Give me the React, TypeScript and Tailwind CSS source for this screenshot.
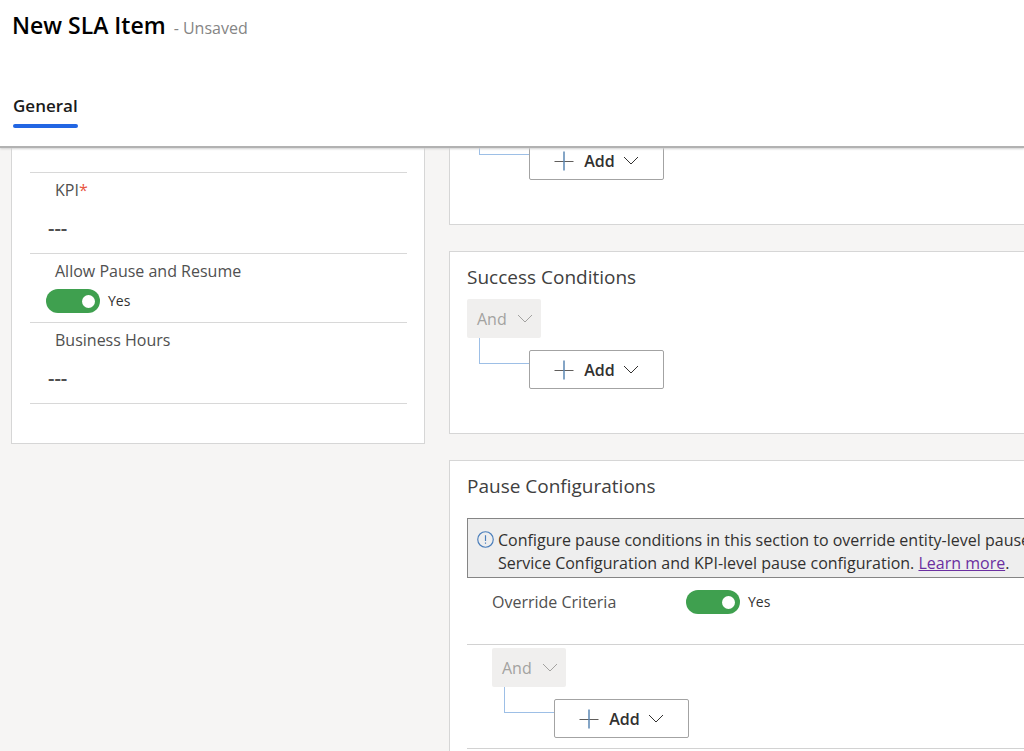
import { useState, type ReactNode } from 'react';

interface FieldProps {
    id: string;
    label: string;
    required?: boolean;
}

function PlusIcon() {
    return (
        <svg width="20" height="20" viewBox="0 0 20 20" fill="none" aria-hidden="true">
            <path d="M0.5 10.5H19.5" stroke="#605e5c" strokeWidth="1" />
            <path d="M10 0.5V19.5" stroke="#5b87b3" strokeWidth="1.5" />
        </svg>
    );
}

function ChevronIcon() {
    return (
        <svg width="16" height="16" viewBox="0 0 16 16" fill="none" aria-hidden="true">
            <path d="M1 4L8 11L15 4" stroke="currentColor" strokeWidth="1" />
        </svg>
    );
}

function InfoIcon() {
    return (
        <svg width="17" height="17" viewBox="0 0 16 16" fill="none" className="mt-0.5 shrink-0" aria-hidden="true">
            <circle cx="8" cy="8" r="7.3" stroke="#4a7ebb" strokeWidth="1.1" />
            <path d="M8 4V9.3M8 10.8V12" stroke="#4a7ebb" strokeWidth="1.1" />
        </svg>
    );
}

function Toggle({ id }: { id: string }) {
    const [on, setOn] = useState(true);

    return (
        <div className="flex items-center gap-2">
            <input
                id={id}
                type="checkbox"
                role="switch"
                checked={on}
                onChange={() => setOn(!on)}
                className="flex h-6 w-[54px] appearance-none items-center rounded-full bg-gray-400 px-[5px] before:size-[13px] before:rounded-full before:bg-white checked:justify-end checked:bg-[#3fa04f]"
            />
            <span className="text-sm text-[#323130]">{on ? 'Yes' : 'No'}</span>
        </div>
    );
}

function LookupField({ id, label, required }: FieldProps) {
    return (
        <div className="h-[81px] border-b border-[#d8d8d8] pt-[5px]">
            <label htmlFor={id} className="block pl-[25px] leading-6 text-[#505050]">
                {label}
                {required && <span className="text-[#e8563f]">*</span>}
            </label>
            <input
                id={id}
                defaultValue="---"
                className="mt-3 block h-7 w-full pl-[18px] text-xl font-semibold text-[#505050] outline-none"
            />
        </div>
    );
}

function AndButton() {
    return (
        <button disabled className="flex h-[39px] w-[74px] items-center justify-between rounded-xs bg-[#f0efee] pr-2 pl-2.5 text-[#a3a2a0]">
            And
            <ChevronIcon />
        </button>
    );
}

function AddRow() {
    return (
        <div className="flex">
            <div className="ml-3 h-[26px] w-[50px] border-b border-l border-[#9dbfe6]" />
            <button className="mt-3 flex h-[39px] w-[135px] items-center justify-center rounded-xs border border-[#a3a3a3] bg-white font-semibold text-[#323130]">
                <PlusIcon />
                <span className="mr-2 ml-2.5">Add</span>
                <ChevronIcon />
            </button>
        </div>
    );
}

function Card({ title, className, children }: { title?: string; className: string; children: ReactNode }) {
    return (
        <section className={`border border-[#d6d6d6] bg-white pl-[17px] ${className}`}>
            {title && <h2 className="text-[19px] leading-7 text-[#404040]">{title}</h2>}
            {children}
        </section>
    );
}

export default function App() {
    return (
        <div className="flex h-screen flex-col overflow-hidden bg-[#f6f5f4] font-['Open_Sans','Noto_Sans',sans-serif] text-base text-[#323130]">
            <header className="relative border-b-2 border-[#b2b2b2] bg-white px-3 shadow-[0_1px_2px_#d0d0d0]">
                <div className="flex items-baseline gap-2 pt-[7px]">
                    <h1 className="text-[23px] leading-9 font-semibold text-black">New SLA Item</h1>
                    <span className="text-base text-[#858585]">- Unsaved</span>
                </div>
                <nav className="flex pt-[51px] pb-[18px] pl-px">
                    <a href="#general" className="text-[17px] leading-6 font-semibold text-[#1a1a1a]">
                        General
                        <span className="mt-1.5 block h-1 rounded-full bg-[#2266e3]" />
                    </a>
                </nav>
            </header>

            <main className="flex min-h-0 flex-1 items-start gap-6 overflow-hidden pl-[11px]">
                <section className="w-[414px] shrink-0 border border-t-0 border-[#d6d6d6] bg-white pr-[17px] pb-[39px] pl-[18px]">
                    <div className="h-[25px] border-b border-[#d8d8d8]" />
                    <LookupField id="kpi" label="KPI" required />
                    <div className="h-[69px] border-b border-[#d8d8d8] pt-[5px]">
                        <label htmlFor="allow-pause" className="block pl-[25px] leading-6 text-[#505050]">
                            Allow Pause and Resume
                        </label>
                        <div className="mt-1.5 pl-4">
                            <Toggle id="allow-pause" />
                        </div>
                    </div>
                    <LookupField id="business-hours" label="Business Hours" />
                </section>

                <div className="-mt-5 -mr-2 flex min-w-0 flex-1 flex-col gap-[26px]">
                    <Card className="pb-11">
                        <AddRow />
                    </Card>

                    <Card title="Success Conditions" className="pt-[11px] pb-11">
                        <div className="pt-2">
                            <AndButton />
                            <AddRow />
                        </div>
                    </Card>

                    <Card title="Pause Configurations" className="pt-[11px]">
                        <div className="mt-[18px] flex h-[60px] gap-1 overflow-hidden border border-[#858585] bg-[#eeeeee] pt-2.5 pl-[9px] text-base leading-[23px] whitespace-nowrap">
                            <InfoIcon />
                            <p>
                                Configure pause conditions in this section to override entity-level pause
                                <br />
                                Service Configuration and KPI-level pause configuration.{' '}
                                <a href="#learn-more" className="text-[#6a2fa0] underline">Learn more</a>.
                            </p>
                        </div>
                        <div className="flex h-[67px] items-start border-b border-[#d2d2d2] pt-3 pl-[25px]">
                            <label htmlFor="override-criteria" className="w-[194px] leading-6 text-[#505050]">
                                Override Criteria
                            </label>
                            <Toggle id="override-criteria" />
                        </div>
                        <div className="border-b border-[#d2d2d2] pt-[3px] pb-2.5 pl-[25px]">
                            <AndButton />
                            <AddRow />
                        </div>
                        <div className="h-16" />
                    </Card>
                </div>
            </main>
        </div>
    );
}
